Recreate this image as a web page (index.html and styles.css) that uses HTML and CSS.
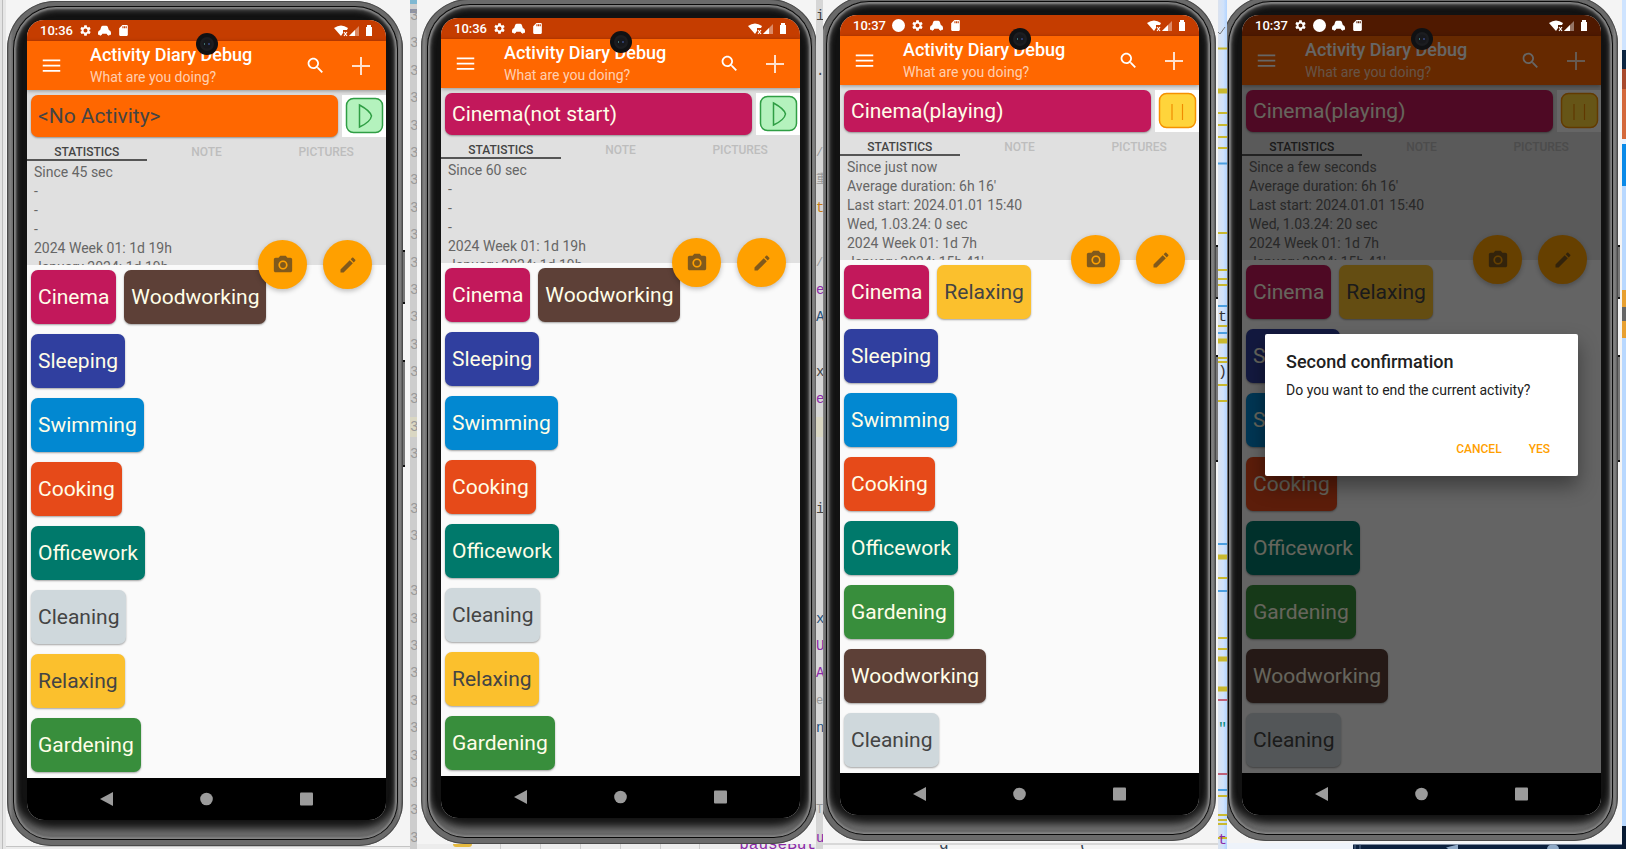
FILE: index.html
```html
<!DOCTYPE html>
<html lang="en">
<head>
<meta charset="utf-8">
<title>Activity Diary</title>
<link rel="stylesheet" href="styles.css">
</head>
<body>
<svg class="sprite" aria-hidden="true">
  <symbol id="menu" viewBox="0 0 24 24"><path d="M2 5h20v2H2zM2 11h20v2H2zM2 17h20v2H2z"/></symbol>
  <symbol id="search" viewBox="0 0 24 24"><path d="M15.5 14h-.79l-.28-.27C15.41 12.59 16 11.11 16 9.5 16 5.91 13.09 3 9.5 3S3 5.91 3 9.5 5.91 16 9.5 16c1.61 0 3.09-.59 4.23-1.57l.27.28v.79l5 4.99L20.49 19l-4.99-5zm-6 0C7.01 14 5 11.99 5 9.5S7.01 5 9.5 5 14 7.01 14 9.5 11.99 14 9.5 14z"/></symbol>
  <symbol id="plus" viewBox="0 0 24 24"><path d="M11 3h2v8h8v2h-8v8h-2v-8H3v-2h8z"/></symbol>
  <symbol id="camera" viewBox="0 0 24 24"><circle cx="12" cy="12" r="3.2"/><path d="M9 2L7.17 4H4c-1.1 0-2 .9-2 2v12c0 1.100.9 2 2 2h16c1.100 0 2-.9 2-2V6c0-1.100-.9-2-2-2h-3.170L15 2H9zm3 15c-2.760 0-5-2.240-5-5s2.240-5 5-5 5 2.240 5 5-2.240 5-5 5z"/></symbol>
  <symbol id="edit" viewBox="0 0 24 24"><path d="M3 17.25V21h3.75L17.81 9.94l-3.750-3.750L3 17.250zM20.710 7.040c.390-.390.390-1.020 0-1.410l-2.340-2.340c-.390-.390-1.020-.390-1.410 0l-1.830 1.830 3.750 3.750 1.830-1.830z"/></symbol>
  <symbol id="gear" viewBox="0 0 24 24"><path d="M19.14 12.94c.04-.3.06-.61.06-.94 0-.32-.02-.64-.07-.94l2.030-1.580c.18-.14.23-.41.12-.61l-1.920-3.320c-.12-.22-.37-.29-.59-.22l-2.390.96c-.5-.38-1.030-.7-1.620-.94l-.36-2.540c-.04-.24-.24-.41-.48-.41h-3.840c-.24 0-.43.17-.47.41l-.36 2.540c-.59.24-1.130.57-1.620.94l-2.390-.96c-.22-.08-.47 0-.59.22L2.740 8.870c-.12.21-.08.47.12.61l2.030 1.580c-.05.3-.09.63-.09.94s.02.64.07.94l-2.030 1.580c-.18.14-.23.41-.12.61l1.920 3.320c.12.22.37.29.59.22l2.390-.96c.5.38 1.030.7 1.620.94l.36 2.540c.05.24.24.41.48.41h3.840c.24 0 .44-.17.47-.41l.36-2.540c.59-.24 1.130-.56 1.620-.94l2.390.96c.22.08.47 0 .59-.22l1.920-3.320c.12-.22.07-.47-.12-.61l-2.010-1.580zM12 15.600c-1.980 0-3.600-1.620-3.600-3.600s1.620-3.600 3.600-3.600 3.600 1.620 3.600 3.600-1.620 3.600-3.600 3.600z"/></symbol>
  <symbol id="car" viewBox="0 0 24 24"><path d="M6 5q1-2 3-2h6q2 0 3 2l2 6q4 1 4 5v4h-2q-2 3-5 0l-1-2H8l-1 2q-3 3-5 0H0v-4q0-4 4-5z"/></symbol>
  <symbol id="sd" viewBox="0 0 24 24"><path d="M18 2h-8L4.020 8 4 20c0 1.100.9 2 2 2h12c1.100 0 2-.9 2-2V4c0-1.100-.9-2-2-2zm-6 6h-2V4h2v4zm3 0h-2V4h2v4zm3 0h-2V4h2v4z"/></symbol>
  <symbol id="dot" viewBox="0 0 24 24"><circle cx="12" cy="12" r="12"/></symbol>
  <symbol id="signals" viewBox="0 0 40 14"><path d="M0 4Q7-1 14 4l-1 2H9v3l-2 3z"/><path d="M10 8l3 4m0-4l-3 4" stroke="currentColor" stroke-width="1.200"/><path d="M25 2v10H15z" opacity=".4"/><path d="M21 6v6h-6z"/><path d="M32 3h1V1h4v2h1v9h-6z"/></symbol>
  <symbol id="play" viewBox="0 0 44 42"><rect x="4.500" y="3.500" width="36" height="34" rx="7" fill="#b4f2bd" stroke="#2f9e44" stroke-width="1.500"/><path d="M17.500 10v22q11-5 12-11-1-5-12-11z" fill="none" stroke="#2f9e44" stroke-width="1.500"/></symbol>
  <symbol id="pause" viewBox="0 0 44 42"><rect x="4.500" y="3.500" width="36" height="34" rx="7" fill="#ffd43b" stroke="#f59100" stroke-width="1.500"/><path d="M17 14v16M27.500 14v16" stroke="#f08c00" stroke-width="1.200"/></symbol>
  <symbol id="lens" viewBox="0 0 22 22"><circle cx="11" cy="11" r="11" fill="#101113"/><circle cx="11" cy="11" r="7" fill="#1c1d20"/><circle cx="11" cy="11" r="4.500" fill="#17181c"/><path d="M8.500 10v2" stroke="#3f7070" stroke-width="1"/><path d="M13 10v2" stroke="#40559a" stroke-width="1.200"/></symbol>
  <symbol id="back" viewBox="0 0 13 14"><path d="M13 0v14L0 7z"/></symbol>
  <symbol id="home" viewBox="0 0 13 14"><circle cx="6.500" cy="7" r="6.300"/></symbol>
  <symbol id="recent" viewBox="0 0 13 14"><rect y=".5" width="13" height="13" rx="1"/></symbol>
</svg>

<main class="desk">
  <div class="edge"></div>

  <div class="column">
    <section class="window window-one">
      <div class="phone">
        <i class="key power"></i><i class="key volume"></i>
        <div class="bezel"><div class="screen">
          <svg class="lens"><use href="#lens"/></svg>
          <div class="status"><span>10:36</span><svg><use href="#gear"/></svg><svg><use href="#car"/></svg><svg><use href="#sd"/></svg><svg class="signals"><use href="#signals"/></svg></div>
          <header class="appbar">
            <button class="icon" aria-label="Menu"><svg><use href="#menu"/></svg></button>
            <div class="titles"><h1>Activity Diary Debug</h1><p>What are you doing?</p></div>
            <button class="icon" aria-label="Search"><svg><use href="#search"/></svg></button>
            <button class="icon add" aria-label="Add"><svg><use href="#plus"/></svg></button>
          </header>
          <section class="detail">
            <div class="current"><button class="card orange">&lt;No Activity&gt;</button><button class="toggle" aria-label="Start"><svg><use href="#play"/></svg></button></div>
            <nav class="tabs"><button class="on">STATISTICS</button><button>NOTE</button><button>PICTURES</button></nav>
            <div class="stats"><p>Since 45 sec</p><p>-</p><p>-</p><p>-</p><p>2024 Week 01: 1d 19h</p><p>January 2024: 1d 19h</p></div>
            <div class="fabs"><button aria-label="Take picture"><svg><use href="#camera"/></svg></button><button aria-label="Edit"><svg class="pen"><use href="#edit"/></svg></button></div>
          </section>
          <div class="list">
            <div class="row"><button class="chip magenta">Cinema</button><button class="chip brown">Woodworking</button></div>
            <div class="row"><button class="chip indigo">Sleeping</button></div>
            <div class="row"><button class="chip blue">Swimming</button></div>
            <div class="row"><button class="chip red">Cooking</button></div>
            <div class="row"><button class="chip teal">Officework</button></div>
            <div class="row"><button class="chip grey">Cleaning</button></div>
            <div class="row"><button class="chip yellow">Relaxing</button></div>
            <div class="row"><button class="chip green">Gardening</button></div>
          </div>
          <nav class="navbar"><button aria-label="Back"><svg><use href="#back"/></svg></button><button aria-label="Home"><svg><use href="#home"/></svg></button><button aria-label="Recent"><svg><use href="#recent"/></svg></button></nav>
        </div></div>
      </div>
    </section>
    <div class="under"></div>
  </div>

  <div class="gutter"><b>3</b><b>3</b><b>3</b><b>3</b><b>3</b><b>3</b><b>3</b><b>3</b><b>3</b><b>3</b><b>3</b><b>3</b><b>3</b><b>3</b><b>3</b><b class="mark">3</b><b>3</b><b>&nbsp;</b><b>3</b><b>3</b><b>&nbsp;</b><b>3</b><b>3</b><b>3</b><b>3</b><b>3</b><b>3</b><b>3</b><b>3</b><b>3</b><b>3</b></div>

  <div class="column">
    <section class="window window-two">
      <div class="phone">
        <i class="key power"></i><i class="key volume"></i>
        <div class="bezel"><div class="screen">
          <svg class="lens"><use href="#lens"/></svg>
          <div class="status"><span>10:36</span><svg><use href="#gear"/></svg><svg><use href="#car"/></svg><svg><use href="#sd"/></svg><svg class="signals"><use href="#signals"/></svg></div>
          <header class="appbar">
            <button class="icon" aria-label="Menu"><svg><use href="#menu"/></svg></button>
            <div class="titles"><h1>Activity Diary Debug</h1><p>What are you doing?</p></div>
            <button class="icon" aria-label="Search"><svg><use href="#search"/></svg></button>
            <button class="icon add" aria-label="Add"><svg><use href="#plus"/></svg></button>
          </header>
          <section class="detail">
            <div class="current"><button class="card magenta">Cinema(not start)</button><button class="toggle" aria-label="Start"><svg><use href="#play"/></svg></button></div>
            <nav class="tabs"><button class="on">STATISTICS</button><button>NOTE</button><button>PICTURES</button></nav>
            <div class="stats"><p>Since 60 sec</p><p>-</p><p>-</p><p>-</p><p>2024 Week 01: 1d 19h</p><p>January 2024: 1d 19h</p></div>
            <div class="fabs"><button aria-label="Take picture"><svg><use href="#camera"/></svg></button><button aria-label="Edit"><svg class="pen"><use href="#edit"/></svg></button></div>
          </section>
          <div class="list">
            <div class="row"><button class="chip magenta">Cinema</button><button class="chip brown">Woodworking</button></div>
            <div class="row"><button class="chip indigo">Sleeping</button></div>
            <div class="row"><button class="chip blue">Swimming</button></div>
            <div class="row"><button class="chip red">Cooking</button></div>
            <div class="row"><button class="chip teal">Officework</button></div>
            <div class="row"><button class="chip grey">Cleaning</button></div>
            <div class="row"><button class="chip yellow">Relaxing</button></div>
            <div class="row"><button class="chip green">Gardening</button></div>
          </div>
          <nav class="navbar"><button aria-label="Back"><svg><use href="#back"/></svg></button><button aria-label="Home"><svg><use href="#home"/></svg></button><button aria-label="Recent"><svg><use href="#recent"/></svg></button></nav>
        </div></div>
      </div>
    </section>
    <div class="under under-two"><span class="tag"></span><span class="cell"></span><span class="cell"></span><span class="cell"></span><span class="cell"></span><span class="cell"></span><span class="cell"></span><code>pauseBut</code></div>
  </div>

  <div class="gutter code"><b>iu</b><b>&nbsp;</b><b>.c</b><b>&nbsp;</b><b>&nbsp;</b><b class="dim">/*</b><b class="dim">重</b><b class="gold">t</b><b>&nbsp;</b><b class="dim">//</b><b class="plum">er</b><b class="navy">Ac</b><b>&nbsp;</b><b>xg</b><b class="plum">el</b><b class="mark">&nbsp;</b><b>&nbsp;</b><b>&nbsp;</b><b>ij</b><b>&nbsp;</b><b>&nbsp;</b><b>&nbsp;</b><b class="navy">x(</b><b class="plum">Un</b><b class="plum">Ac</b><b class="dim">el</b><b class="navy">nd</b><b>&nbsp;</b><b>&nbsp;</b><b class="dim">To</b><b class="plum">ut</b></div>

  <div class="column">
    <section class="window window-three">
      <div class="phone">
        <i class="key power"></i><i class="key volume"></i>
        <div class="bezel"><div class="screen">
          <svg class="lens"><use href="#lens"/></svg>
          <div class="status"><span>10:37</span><svg><use href="#dot"/></svg><svg><use href="#gear"/></svg><svg><use href="#car"/></svg><svg><use href="#sd"/></svg><svg class="signals"><use href="#signals"/></svg></div>
          <header class="appbar">
            <button class="icon" aria-label="Menu"><svg><use href="#menu"/></svg></button>
            <div class="titles"><h1>Activity Diary Debug</h1><p>What are you doing?</p></div>
            <button class="icon" aria-label="Search"><svg><use href="#search"/></svg></button>
            <button class="icon add" aria-label="Add"><svg><use href="#plus"/></svg></button>
          </header>
          <section class="detail">
            <div class="current"><button class="card magenta">Cinema(playing)</button><button class="toggle" aria-label="Pause"><svg><use href="#pause"/></svg></button></div>
            <nav class="tabs"><button class="on">STATISTICS</button><button>NOTE</button><button>PICTURES</button></nav>
            <div class="stats"><p>Since just now</p><p>Average duration: 6h 16'</p><p>Last start: 2024.01.01 15:40</p><p>Wed, 1.03.24: 0 sec</p><p>2024 Week 01: 1d 7h</p><p>January 2024: 15h 41'</p></div>
            <div class="fabs"><button aria-label="Take picture"><svg><use href="#camera"/></svg></button><button aria-label="Edit"><svg class="pen"><use href="#edit"/></svg></button></div>
          </section>
          <div class="list">
            <div class="row"><button class="chip magenta">Cinema</button><button class="chip yellow">Relaxing</button></div>
            <div class="row"><button class="chip indigo">Sleeping</button></div>
            <div class="row"><button class="chip blue">Swimming</button></div>
            <div class="row"><button class="chip red">Cooking</button></div>
            <div class="row"><button class="chip teal">Officework</button></div>
            <div class="row"><button class="chip green">Gardening</button></div>
            <div class="row"><button class="chip brown">Woodworking</button></div>
            <div class="row"><button class="chip grey">Cleaning</button></div>
          </div>
          <nav class="navbar"><button aria-label="Back"><svg><use href="#back"/></svg></button><button aria-label="Home"><svg><use href="#home"/></svg></button><button aria-label="Recent"><svg><use href="#recent"/></svg></button></nav>
        </div></div>
      </div>
    </section>
    <div class="under under-three"><code>g</code><code>(</code></div>
  </div>

  <svg class="ruler" viewBox="0 0 9 849" preserveAspectRatio="none" aria-hidden="true">
    <g stroke="#c9b92f" stroke-width="2"><path d="M0 48.500h9M0 113h9M0 125h9M0 137h9M0 148h9M0 233h9M0 270h9M0 279h9M0 285h9M0 326h9M0 358h9M0 362h9M0 385h9M0 401h9M0 578h9M0 638h9M0 649h9M0 796h9M0 815h9M0 820h9M0 824h9M0 838h9"/><path stroke-width="5" d="M0 91h9M0 341h9M0 557h9M0 659h9M0 689h9"/></g>
    <g stroke="#4b9fe0" stroke-width="2"><path d="M0 163.500h9M0 306h9M0 333h9M0 544h9M0 591h9M0 790h9"/></g>
    <path d="M0 700h9M0 774h9" stroke="#c0617a" stroke-width="2"/>
    <path d="M0 32l2 2 5-7" fill="none" stroke="#777"/>
    <g font-family="Liberation Mono, monospace" font-size="15" fill="#333"><text x="0" y="321">t</text><text x="0" y="376">)</text><text x="0" y="733" fill="#0a8a7a">"</text><text x="0" y="844" fill="#8b2aa8">t</text></g>
  </svg>

  <div class="column">
    <section class="window window-four">
      <div class="phone">
        <i class="key power"></i><i class="key volume"></i>
        <div class="bezel"><div class="screen">
          <svg class="lens"><use href="#lens"/></svg>
          <div class="status dimmed"><span>10:37</span><svg><use href="#gear"/></svg><svg><use href="#dot"/></svg><svg><use href="#car"/></svg><svg><use href="#sd"/></svg><svg class="signals"><use href="#signals"/></svg></div>
          <div class="app">
          <header class="appbar">
            <button class="icon" aria-label="Menu"><svg><use href="#menu"/></svg></button>
            <div class="titles"><h1>Activity Diary Debug</h1><p>What are you doing?</p></div>
            <button class="icon" aria-label="Search"><svg><use href="#search"/></svg></button>
            <button class="icon add" aria-label="Add"><svg><use href="#plus"/></svg></button>
          </header>
          <section class="detail">
            <div class="current"><button class="card magenta">Cinema(playing)</button><button class="toggle" aria-label="Pause"><svg><use href="#pause"/></svg></button></div>
            <nav class="tabs"><button class="on">STATISTICS</button><button>NOTE</button><button>PICTURES</button></nav>
            <div class="stats"><p>Since a few seconds</p><p>Average duration: 6h 16'</p><p>Last start: 2024.01.01 15:40</p><p>Wed, 1.03.24: 20 sec</p><p>2024 Week 01: 1d 7h</p><p>January 2024: 15h 41'</p></div>
            <div class="fabs"><button aria-label="Take picture"><svg><use href="#camera"/></svg></button><button aria-label="Edit"><svg class="pen"><use href="#edit"/></svg></button></div>
          </section>
          <div class="list">
            <div class="row"><button class="chip magenta">Cinema</button><button class="chip yellow">Relaxing</button></div>
            <div class="row"><button class="chip indigo">Sleeping</button></div>
            <div class="row"><button class="chip blue">Swimming</button></div>
            <div class="row"><button class="chip red">Cooking</button></div>
            <div class="row"><button class="chip teal">Officework</button></div>
            <div class="row"><button class="chip green">Gardening</button></div>
            <div class="row"><button class="chip brown">Woodworking</button></div>
            <div class="row"><button class="chip grey">Cleaning</button></div>
          </div>
          <div class="scrim">
            <div class="dialog" role="dialog" aria-labelledby="ask">
              <h2 id="ask">Second confirmation</h2>
              <p>Do you want to end the current activity?</p>
              <div class="actions"><button>CANCEL</button><button>YES</button></div>
            </div>
          </div>
          </div>
          <nav class="navbar"><button aria-label="Back"><svg><use href="#back"/></svg></button><button aria-label="Home"><svg><use href="#home"/></svg></button><button aria-label="Recent"><svg><use href="#recent"/></svg></button></nav>
        </div></div>
      </div>
    </section>
    <div class="under under-four"><svg class="peek" viewBox="0 0 269 5" aria-hidden="true"><path fill="#0a1f3c" d="M0 0h269v5H0z"/><path d="M2 0v5M7 0v5" stroke="#5c7390"/><path d="M93 3l12-3v5h-9zM194 5q0-5 6-5t6 5z" fill="#8fa9c6"/></svg></div>
  </div>

  <div class="edge edge-right"></div>
</main>
</body>
</html>
```
FILE: styles.css
```css
* { box-sizing: border-box; }
body { margin: 0; background: #ececec; font-family: Roboto, "Noto Sans", sans-serif; }
h1, h2, p { margin: 0; }
button { border: 0; padding: 0; background: none; font: inherit; color: inherit; cursor: pointer; }
.sprite { display: none; }
svg { display: block; fill: currentColor; }

.desk {
  display: grid;
  grid-template-columns: 6px 404fr 7px 399fr 7px 395fr 9px 395fr 4px;
  min-height: 100vh;
}
.column { display: flex; flex-direction: column; min-width: 0; }
.edge { background: linear-gradient(90deg, #e3e3e3 2px, #bdbdbd 2px, #bdbdbd 3px, #e6e6e6 3px); }
.edge-right {
  background: linear-gradient(#cfe4ff 50px, #0c2440 50px 69px, #a8492c 69px 89px, #d4683a 89px 139px, #e8f2ff 139px 144px, #0a8ae8 144px 186px, #b8d8ff 186px 290px, #e8a030 290px 307px, #666 307px 321px, #e8a030 321px 338px, #b8d8ff 338px 826px, #081a33 826px);
}

/* editor background between the windows */
.gutter {
  display: flex; flex-direction: column; justify-content: space-between;
  height: 849px; padding: 6px 0 1px; overflow: hidden;
  background: linear-gradient(#7fb8d2 4px, #d0d0d0 4px 9px, #8d92a8 9px 13px, #cdcdcd 13px);
}
.gutter b { font: 14px/20px "Liberation Mono", "Noto Sans CJK SC", monospace; color: #999; white-space: nowrap; }
.gutter .mark { background: #dad7c3; }
.gutter.code { background: #d6d6d6; }
.gutter.code b { color: #444; }
.gutter.code .dim { color: #999; font-size: 12px; }
.gutter.code .plum { color: #8b2aa8; }
.gutter.code .gold { color: #c87a10; }
.gutter.code .navy { color: #25507a; }
.ruler { width: 100%; height: 849px; background: linear-gradient(90deg, #dbe2ee, #cfe2fb 60%, #b3d4ff); }

.window { overflow: hidden; background: #f4f4f4; }
.window-one { padding: 1px 7px 0 1px; border-bottom: 1px solid #c4c4c4; }
.window-two .phone { margin: -1px -1px 0 4px; }
.window-three .phone { margin: -4px 2px 2px -3px; }
.window-four .phone { margin: -4px 4px 2px -5px; }
.window-three { border-bottom: 2px solid #d8d8d8; }

.under { flex: 1; height: 0; overflow: hidden; background: #ececec; }
.under-two { display: flex; align-items: flex-start; padding-left: 36px; }
.under-two .tag { width: 20px; height: 3px; border-radius: 0 0 5px 5px; background: #e5b93f; margin-right: 28px; }
.under-two .cell { width: 41px; height: 6px; border-left: 1px solid #ccc; }
.under code { font: 16px/2px "Liberation Mono", monospace; height: 6px; color: #8b2aa8; }
.under-three { display: flex; justify-content: space-between; padding: 0 130px 0 116px; background: #f4f4f4; }
.under-three code { color: #345; line-height: 0; }
.under-four { padding-left: 126px; background: #eef3fa; }
.peek { width: 100%; height: 8px; }

/* phone body */
.phone {
  position: relative;
  padding: 5px 5px 6px 6px;
  border-radius: 48px 48px 44px 44px;
  background: linear-gradient(90deg, #555, #858585 3px, #6a6a6a 6px, #6a6a6a calc(100% - 6px), #858585 calc(100% - 3px), #444);
  box-shadow: inset 0 0 0 1px #4a4a4a;
}
.key { position: absolute; left: 100%; width: 2px; background: #777; border: solid #111; border-width: 2px 0; }
.power { top: 249px; height: 54px; }
.volume { top: 359px; height: 107px; }
.bezel {
  padding: 14px 12px 20px 14px;
  border-radius: 43px 43px 38px 38px;
  background: #121212;
  box-shadow: inset 0 0 0 1px #0a0a0a, inset 0 0 2px 3px #858585, inset 0 1px 5px 4px #4a4a4a, inset 0 -14px 10px -3px #7a7a7a;
}
.screen { position: relative; overflow: hidden; border-radius: 17px; background: #fafafa; }
.lens { position: absolute; z-index: 3; top: 13px; left: calc(50% - 11px); width: 22px; height: 22px; }

.status {
  display: flex; align-items: center; gap: 6px;
  height: 21px; padding: 0 12px 0 13px;
  background: #c53d00; color: #fff;
}
.status.dimmed { background: #4f1900; }
.status span { font-size: 13px; font-weight: 500; line-height: 20px; }
.status svg { width: 13px; height: 13px; }
.status .signals { width: 40px; height: 14px; margin-left: auto; }

.app { position: relative; }
.appbar {
  position: relative; z-index: 1;
  display: flex; align-items: center; gap: 23px;
  height: 49px; padding: 0 13px 0 14px;
  background: #ff6700; color: #fff;
  box-shadow: 0 1px 4px rgba(0, 0, 0, .35);
}
.icon svg { width: 21px; height: 21px; }
.icon + .titles { margin-left: 5px; }
.titles { flex: 1; min-width: 0; white-space: nowrap; }
.titles h1 { font-size: 18px; font-weight: 500; line-height: 22px; }
.titles p { font-size: 14px; line-height: 22px; color: rgba(255, 255, 255, .7); }
.icon.add { color: rgba(255, 255, 255, .8); }
.icon.add svg { width: 24px; height: 24px; }

.detail { position: relative; height: 175px; padding-top: 5px; background: #e0e0e0; }
.current { display: flex; gap: 4px; padding-left: 4px; }
.card {
  flex: 1; height: 42px; padding: 0 7px; border-radius: 7px;
  font-size: 21px; text-align: left;
  box-shadow: 0 1px 2px rgba(0, 0, 0, .35);
}
.toggle { width: 44px; height: 42px; background: #fff; }
.toggle svg { width: 44px; height: 42px; }
.tabs { display: grid; grid-template-columns: repeat(3, 1fr); height: 24px; }
.tabs button { padding-top: 8px; font-size: 12px; font-weight: 500; line-height: 14px; color: #bdbdbd; border-bottom: 2px solid transparent; }
.tabs .on { color: #444; border-color: #555; }
.stats { height: 104px; padding: 2px 7px 0; overflow: hidden; font-size: 14px; line-height: 19px; color: #666; }
.fabs { position: absolute; z-index: 1; right: 14px; bottom: -24px; display: flex; gap: 16px; }
.fabs button {
  display: grid; place-items: center; width: 49px; height: 49px;
  border-radius: 50%; background: #ffa000; color: #80591c;
  box-shadow: 0 2px 5px rgba(0, 0, 0, .25);
}
.fabs svg { width: 22px; height: 22px; }
.fabs .pen { width: 20px; height: 20px; }

.list { display: flex; flex-direction: column; gap: 10px; padding: 5px 4px 6px; background: #fafafa; }
.row { display: flex; gap: 8px; }
.chip { height: 54px; padding: 0 7px; border-radius: 7px; font-size: 21px; box-shadow: 0 1px 2px rgba(0, 0, 0, .35); }
.orange { background: #ff6700; color: #444; }
.magenta { background: #c2185b; color: #fffde7; }
.brown { background: #5d4037; color: #fffde7; }
.indigo { background: #303f9f; color: #fffde7; }
.blue { background: #0288d1; color: #fffde7; }
.red { background: #e64a19; color: #fffde7; }
.teal { background: #00796b; color: #fffde7; }
.green { background: #388e3c; color: #fffde7; }
.grey { background: #cfd8dc; color: #444; }
.yellow { background: #fbc02d; color: #444; }

.navbar { display: flex; align-items: center; justify-content: center; gap: 87px; height: 42px; background: #000; color: #9b9b9b; }
.navbar svg { width: 13px; height: 14px; }

.scrim {
  position: absolute; z-index: 2; inset: 0;
  display: flex; align-items: center; padding: 0 23px;
  background: rgba(0, 0, 0, .6);
}
.dialog {
  flex: 1; padding: 16px 21px 13px; border-radius: 2px;
  background: #fff; color: #212121;
  box-shadow: 0 10px 20px rgba(0, 0, 0, .4);
}
.dialog h2 { font-size: 18px; font-weight: 500; line-height: 24px; }
.dialog p { margin-top: 6px; font-size: 14px; line-height: 20px; }
.actions { display: flex; justify-content: flex-end; gap: 27px; padding: 36px 7px 0; font-size: 12px; font-weight: 500; line-height: 27px; color: #ffa000; }
```
